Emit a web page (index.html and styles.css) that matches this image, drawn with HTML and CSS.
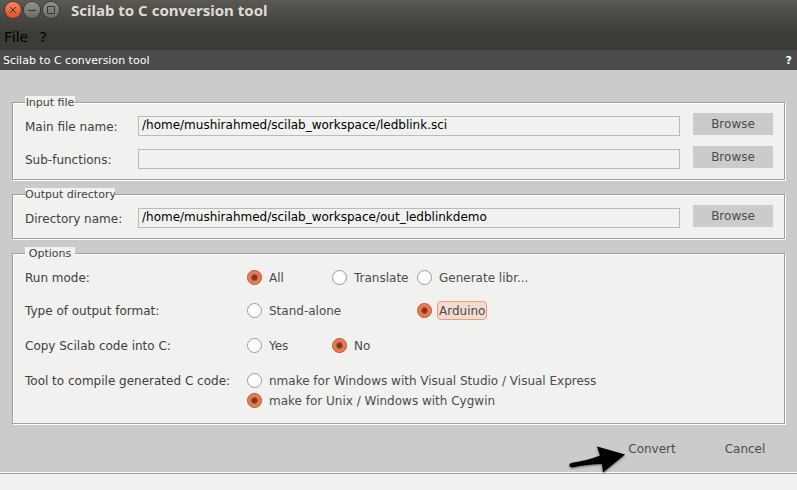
FILE: index.html
```html
<!DOCTYPE html>
<html lang="en">
<head>
<meta charset="utf-8">
<title>Scilab to C conversion tool</title>
<link rel="stylesheet" href="styles.css">
</head>
<body>
<header class="titlebar">
  <button class="win win-close" type="button" aria-label="Close"><svg viewBox="0 0 16 16"><path d="M5 5l6 6M11 5l-6 6"/></svg></button>
  <button class="win" type="button" aria-label="Minimize"><svg viewBox="0 0 16 16"><path d="M4 8.500h8"/></svg></button>
  <button class="win" type="button" aria-label="Maximize"><svg viewBox="0 0 16 16"><path d="M4.500 4.500h7v7h-7z"/></svg></button>
  <h1 class="title">Scilab to C conversion tool</h1>
</header>
<nav class="menubar">
  <button type="button">File</button>
  <button type="button">?</button>
</nav>
<div class="dockbar">
  <span>Scilab to C conversion tool</span>
  <button type="button" aria-label="Help">?</button>
</div>
<form class="content">
  <fieldset class="group">
    <legend><span>Input file</span></legend>
    <div class="files">
      <label for="main">Main file name:</label>
      <input id="main" type="text" value="/home/mushirahmed/scilab_workspace/ledblink.sci">
      <button class="btn" type="button">Browse</button>
      <label for="sub">Sub-functions:</label>
      <input id="sub" type="text">
      <button class="btn" type="button">Browse</button>
    </div>
  </fieldset>
  <fieldset class="group">
    <legend><span class="clipped">Output directory</span></legend>
    <div class="files">
      <label for="dir">Directory name:</label>
      <input id="dir" type="text" value="/home/mushirahmed/scilab_workspace/out_ledblinkdemo">
      <button class="btn" type="button">Browse</button>
    </div>
  </fieldset>
  <fieldset class="group">
    <legend><span>Options</span></legend>
    <div class="options">
      <span class="name">Run mode:</span>
      <label class="opt"><input type="radio" name="mode" checked><span>All</span></label>
      <label class="opt"><input type="radio" name="mode"><span>Translate</span></label>
      <label class="opt"><input type="radio" name="mode"><span>Generate libr...</span></label>
      <span class="name">Type of output format:</span>
      <label class="opt span-two"><input type="radio" name="format"><span>Stand-alone</span></label>
      <label class="opt"><input type="radio" name="format" checked><span class="focused">Arduino</span></label>
      <span class="name">Copy Scilab code into C:</span>
      <label class="opt"><input type="radio" name="copy"><span>Yes</span></label>
      <label class="opt"><input type="radio" name="copy" checked><span>No</span></label>
      <span class="name">Tool to compile generated C code:</span>
      <label class="opt span-rest"><input type="radio" name="tool"><span>nmake for Windows with Visual Studio / Visual Express</span></label>
      <label class="opt span-rest"><input type="radio" name="tool" checked><span>make for Unix / Windows with Cygwin</span></label>
    </div>
  </fieldset>
  <div class="actions">
    <div class="pointed">
      <button class="btn" type="button">Convert</button>
      <svg class="arrow" viewBox="0 0 60 28" aria-hidden="true"><path d="M3 17Q20 14.500 32 9.500L29 0.500L57 8.500L35 26.500L34 18Q20 18 4 21.500Q-1 20 3 17Z"/></svg>
    </div>
    <button class="btn" type="button">Cancel</button>
  </div>
</form>
<footer class="status"></footer>
</body>
</html>
```

FILE: styles.css
```css
* {
  box-sizing: border-box;
}

body {
  margin: 0;
  min-height: 100vh;
  display: flex;
  flex-direction: column;
  background: #f1f1ef;
  color: #404040;
  font: 12px/20px "DejaVu Sans", sans-serif;
}

button,
input {
  margin: 0;
  font: inherit;
  color: inherit;
}

button {
  padding: 0;
  border: 0;
  background: none;
}

.titlebar {
  display: flex;
  align-items: center;
  gap: 3px;
  height: 22px;
  padding: 0 5px 2px;
  background: linear-gradient(#5a5953, #45443f);
}

.title {
  margin: 0 0 0 9px;
  color: #dfdbd2;
  font: bold 15px/20px "Noto Sans", sans-serif;
}

.win {
  width: 16px;
  height: 16px;
  border-radius: 50%;
  background: linear-gradient(#92918a, #6b6a64);
  box-shadow: 0 0 0 1px #3a3934;
}

.win-close {
  background: linear-gradient(#f58460, #e2501f);
}

.win svg {
  display: block;
  fill: none;
  stroke: #3a3631;
  stroke-width: 1;
}

.menubar {
  display: flex;
  gap: 12px;
  height: 28px;
  padding: 0 4px;
  background: linear-gradient(#45443f, #3c3b37 40%);
  color: #000;
  font: 15px/29px "Noto Sans", sans-serif;
}

.dockbar {
  display: flex;
  justify-content: space-between;
  height: 20px;
  padding: 0 5px 0 3px;
  background: #4b4b4b;
  color: #fff;
  font-size: 11px;
  line-height: 21px;
}

.dockbar button {
  font-weight: bold;
}

.content {
  display: flex;
  flex-direction: column;
  gap: 8px;
  flex: 1;
  padding: 26px 12px 12px;
  background: #c9ccc8;
}

.group {
  min-width: 0;
  margin: 0;
  padding: 4px 11px 10px 12px;
  border: 1px solid #a0a09e;
  background: #f1f1ef;
  box-shadow: 1px 1px 0 #fff, inset 1px 1px 0 #fff;
}

.group legend {
  padding: 0;
  background: #f1f1ef;
  font-size: 11px;
  line-height: 13px;
}

.group legend span {
  display: block;
  min-width: 50px;
  text-align: center;
}

.group .clipped {
  width: 90px;
  overflow: hidden;
  white-space: nowrap;
  text-align: left;
}

.files {
  display: grid;
  grid-template-columns: 100px 1fr 80px;
  grid-auto-rows: 23px;
  gap: 10px 13px;
}

.files label {
  align-self: end;
}

.files label,
.name {
  line-height: 22px;
  height: 20px;
}

.files input {
  align-self: end;
  width: 100%;
  height: 20px;
  padding: 0 3px 2px;
  border: 1px solid #babab6;
  background: transparent;
  color: #000;
}

.btn {
  width: 80px;
  height: 22px;
  background: #c9ccc8;
  color: #4c4c4c;
}

.options {
  display: grid;
  grid-template-columns: 222px 85px 85px 1fr;
  grid-template-rows: 33px 35px 35px 20px 20px;
  padding: 3px 0;
}

.name {
  grid-column: 1;
}

.opt {
  display: flex;
  align-items: center;
  gap: 5px;
  height: 20px;
  color: #4c4c4c;
  white-space: nowrap;
}

.span-two {
  grid-column: span 2;
}

.span-rest {
  grid-column: 2 / -1;
}

.opt input {
  appearance: none;
  flex: none;
  width: 15px;
  height: 15px;
  border: 1px solid #9a9a97;
  border-radius: 50%;
  background: #fff;
}

.opt input:checked {
  border-color: #a9512f;
  background: radial-gradient(circle, #713a28 0 2px, #ef7448 4px 5px, #f0805a 6px);
}

.opt span {
  height: 19px;
  padding: 0 1px;
  border: 1px solid transparent;
  border-radius: 4px;
  line-height: 18px;
}

.opt .focused {
  border-color: #f09a78;
  background: #f2dcd2;
}

.actions {
  display: flex;
  justify-content: flex-end;
  gap: 13px;
  margin-top: 6px;
}

.pointed {
  position: relative;
}

.arrow {
  position: absolute;
  top: 8px;
  right: 64px;
  width: 60px;
  height: 28px;
  overflow: visible;
  fill: #000;
  filter: drop-shadow(0 1px 1px #666);
}

.status {
  height: 18px;
  border-top: 1px solid #fff;
  box-shadow: inset 0 1px 0 #a0a09e;
}
```
